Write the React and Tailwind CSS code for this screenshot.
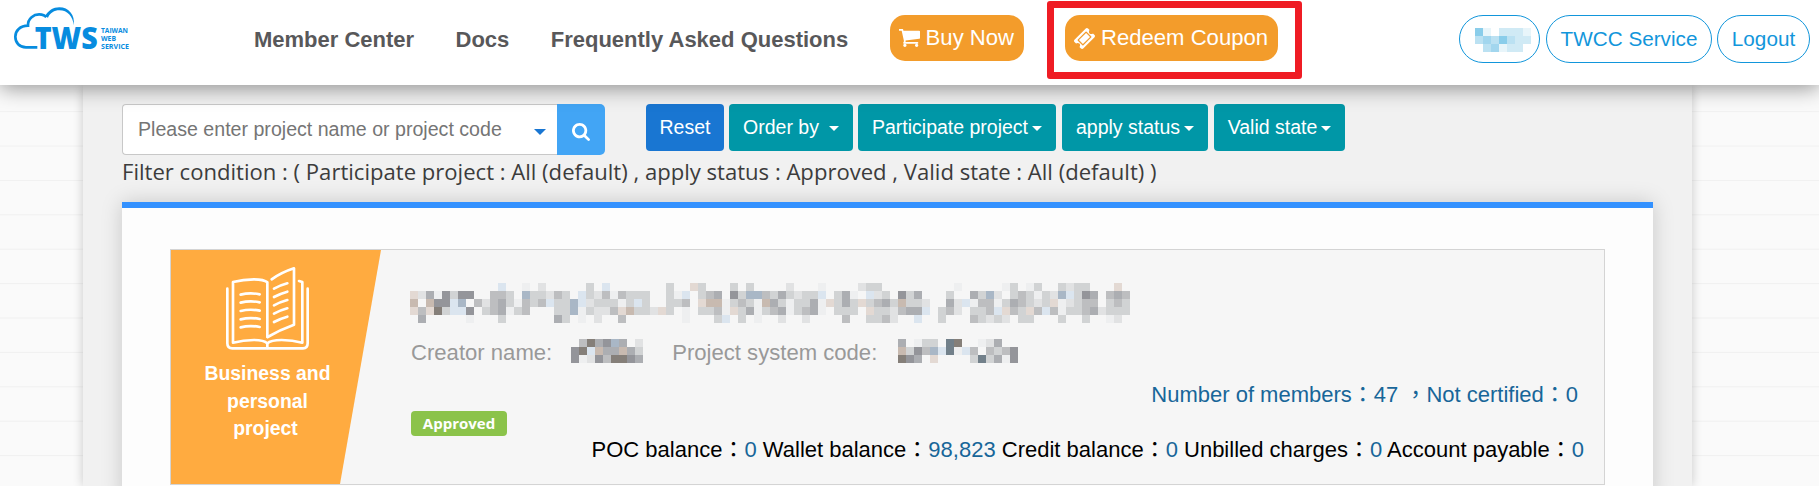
import React from "react";

const navLinks = ["Member Center", "Docs", "Frequently Asked Questions"];

const filters = [
  { label: "Order by", width: "w-[124px]", gap: "ml-2.5", margin: "ml-[5px]" },
  { label: "Participate project", width: "w-[198px]", gap: "ml-1", margin: "ml-[5px]" },
  { label: "apply status", width: "w-[146px]", gap: "ml-1", margin: "ml-[6px]" },
  { label: "Valid state", width: "w-[131px]", gap: "ml-1", margin: "ml-[6px]" },
];

const balances = [
  { label: "POC balance", value: "0" },
  { label: "Wallet balance", value: "98,823" },
  { label: "Credit balance", value: "0" },
  { label: "Unbilled charges", value: "0" },
  { label: "Account payable", value: "0" },
];

// One character per 8px block of a masked value
const palette = {
  1: "#eeeff0",
  2: "#e1e2e3",
  3: "#d1d3d4",
  4: "#bdbec0",
  5: "#acaeb2",
  6: "#94959a",
  7: "#857f79",
  8: "#72808a",
  b: "#dbe5ef",
  c: "#a9b7c6",
  p: "#e3d9d3",
  q: "#c8bab0",
  A: "#8acdea",
  B: "#a2d6ee",
  C: "#bbe1f2",
  D: "#d0eaf5",
  E: "#e8f5fa",
};

const maskedTitle = [
  "...........b..1.2.....3.b.......3..p3...3.3....2...1....233.........1.....13.13..3233...p.",
  "p2516366..443.c33243.b32414333..31b.345.63cc4353233b.351.b23.635...3..53c2.343132cb365.454",
  "q.q66bc.424531434b33cb233313b3..334.pqq13431q5313351p353p3453q332..52b1441354323p12344.343",
  "p4p73bb6.345134...33c13224pq332p3.1.3341p35134513451.333.p332455b.342.334bp43p4b4133452333",
  ".5.....1...3......53.1.2..4.......1...3b.3.1..2..2....4..3342..b..3...43232.33...3..3..12.",
];

const maskedCreator = [".4756c5.2", "67bq55q53", "612647765"];
const maskedCode = ["5.133.87..125..", "q364cb81b4.4346", "765.p....383516"];
const maskedUser = ["AE.DDDE", "CBCACDD", ".CBEDD."];

const Mosaic = ({ rows }) => (
  <div>
    {rows.map((row, i) => (
      <div key={i} className="flex">
        {row.split("").map((cell, j) => (
          <span
            key={j}
            className="block h-2 w-2 shrink-0"
            style={{ backgroundColor: palette[cell] }}
          />
        ))}
      </div>
    ))}
  </div>
);

const Caret = ({ className }) => (
  <svg viewBox="0 0 10 5" className={className} fill="currentColor">
    <path d="M0 0h10L5 5z" />
  </svg>
);

const Logo = () => (
  <svg viewBox="0 0 390 210" className="h-[70px] w-[130px]" fill="#078cdf">
    <path
      d="M112 142H78C58 142 46 128 46 110C46 92 60 77 84 77C83 57 100 40 125 44C131 45 135 47 139 51"
      fill="none"
      stroke="#078cdf"
      strokeWidth="8"
    />
    <path d="M135 49C144 32 160 22 178 22C206 22 226 45 221 76C219 50 203 31 178 31C163 31 150 39 144 53Z" />
    <text
      x="104"
      y="147"
      fontSize="88"
      fontWeight="800"
      fontFamily="'Open Sans'"
      textLength="189"
      lengthAdjust="spacingAndGlyphs"
    >
      TWS
    </text>
    <g fontSize="21" fontWeight="700" fontFamily="'Open Sans'">
      <text x="303" y="99" textLength="81" lengthAdjust="spacingAndGlyphs">TAIWAN</text>
      <text x="303" y="123" textLength="45" lengthAdjust="spacingAndGlyphs">WEB</text>
      <text x="303" y="147" textLength="84" lengthAdjust="spacingAndGlyphs">SERVICE</text>
    </g>
  </svg>
);

const CartIcon = () => (
  <svg viewBox="64 256 1600 1408" preserveAspectRatio="none" className="h-[18px] w-[21px]" fill="currentColor">
    <path d="M640 1536q0 52-38 90t-90 38-90-38-38-90 38-90 90-38 90 38 38 90zm896 0q0 52-38 90t-90 38-90-38-38-90 38-90 90-38 90 38 38 90zm128-1088v512q0 24-16.5 42.5t-40.5 21.5l-1044 122q13 60 13 70 0 16-24 64h920q26 0 45 19t19 45-19 45-45 19h-1024q-26 0-45-19t-19-45q0-11 8-31.5t16-36 21.5-40 15.5-29.5l-177-823h-204q-26 0-45-19t-19-45 19-45 45-19h256q16 0 28.5 6.5t19.5 15.5 13 24.5 8 26 5.5 29.5 4.5 26h1201q26 0 45 19t19 45z" />
  </svg>
);

const TicketIcon = () => (
  <svg viewBox="53 53 1686 1686" className="h-[21px] w-[21px]" fill="currentColor">
    <path d="M1024 452l316 316-572 572-316-316zm-211 979l618-618q19-19 19-45t-19-45l-362-362q-18-18-45-18t-45 18l-618 618q-19 19-19 45t19 45l362 362q18 18 45 18t45-18zm889-637l-907 908q-37 37-90.5 37t-90.5-37l-126-126q56-56 56-136t-56-136-136-56-136 56l-125-126q-37-37-37-90.5t37-90.5l907-906q37-37 90.5-37t90.5 37l125 125q-56 56-56 136t56 136 136 56 136-56l126 125q37 37 37 90.5t-37 90.5z" />
  </svg>
);

const SearchIcon = () => (
  <svg viewBox="64 128 1664 1664" className="h-[18px] w-[18px]" fill="currentColor">
    <path d="M1216 832q0-185-131.5-316.5t-316.5-131.5-316.5 131.5-131.5 316.5 131.5 316.5 316.5 131.5 316.5-131.5 131.5-316.5zm512 832q0 52-38 90t-90 38q-54 0-90-38l-343-342q-179 124-399 124-143 0-273.5-55.5t-225-150-150-225-55.5-273.5 55.5-273.5 150-225 225-150 273.5-55.5 273.5 55.5 225 150 150 225 55.5 273.5q0 220-124 399l343 343q37 37 37 90z" />
  </svg>
);

const BookIcon = () => (
  <svg
    viewBox="345 228 255 255"
    className="h-[85px] w-[85px]"
    fill="none"
    stroke="white"
    strokeWidth="8"
    strokeLinecap="round"
    strokeLinejoin="round"
  >
    <path d="M352 296V460Q352 475 367 475H579Q593 475 593 460V296" />
    <path d="M472 441V277Q462 268 432 268Q400 268 369 276V458Q400 450 432 450Q462 450 472 460V474" />
    <path d="M472 460Q482 450 515 450Q548 450 577 458V276L567 273" />
    <path d="M485 268Q515 247 552 235V404Q510 419 473 441" />
    <path d="M392 314Q420 307 449 313M392 338Q420 331 449 337M392 363Q420 356 449 362M392 388Q420 381 449 387M392 412Q420 405 449 411" />
    <path d="M492 296Q510 286 532 280M492 321Q510 311 532 305M492 346Q510 336 532 330M492 371Q510 361 532 355M492 396Q510 386 532 380" />
  </svg>
);

const Header = () => (
  <header className="relative z-10 flex h-[85px] items-start bg-white pr-[9px] shadow-[0_3px_20px_rgba(0,0,0,0.42)]">
    <Logo />
    <nav className="ml-[124px] flex items-start gap-[41.4px]">
      {navLinks.map((link) => (
        <a key={link} className="text-[22px] leading-[79px] font-bold whitespace-nowrap text-[#58585a]">
          {link}
        </a>
      ))}
      <a className="mt-[15px] flex h-[46px] w-[134px] items-center gap-1.5 rounded-[15px] bg-[#f39c2b] pl-[9px] text-[22.1px] leading-[45px] whitespace-nowrap text-white">
        <CartIcon />
        <span className="-mt-px">Buy Now</span>
      </a>
      <a className="mt-[15px] flex h-[46px] w-[213px] items-center gap-1.5 rounded-[15px] bg-[#f39c2b] pl-[9px] text-[22.1px] leading-[45px] whitespace-nowrap text-white">
        <TicketIcon />
        <span className="-mt-px">Redeem Coupon</span>
      </a>
    </nav>
    {/* Highlight around the coupon button */}
    <div className="absolute top-px left-[1047px] h-[78px] w-[255px] rounded-[3px] border-[7px] border-[#ef1c24]" />
    <div className="mt-[15px] ml-auto flex text-[20.7px] leading-[46px] text-[#1296db]">
      <a className="h-12 w-[81px] rounded-full border border-[#1296db] pt-3 pl-[15px]">
        <Mosaic rows={maskedUser} />
      </a>
      <a className="ml-1.5 h-12 w-[166px] rounded-full border border-[#1296db] text-center whitespace-nowrap">
        TWCC Service
      </a>
      <a className="ml-[5px] h-12 w-[93px] rounded-full border border-[#1296db] text-center">Logout</a>
    </div>
  </header>
);

const Toolbar = () => (
  <div className="flex items-start text-[19.5px]">
    <div className="flex h-[51px] w-[435px] items-center justify-between rounded-l-[4px] border border-r-0 border-[#c8c8c8] bg-white pr-[11px] pl-[15px]">
      <span className="text-[19.6px] whitespace-nowrap text-[#757575]">
        Please enter project name or project code
      </span>
      <Caret className="mt-1 h-1.5 w-3 text-[#1976d2]" />
    </div>
    <button className="flex h-[51px] w-12 items-center justify-center rounded-r-[5px] bg-[#42a5f5] pt-1 text-white">
      <SearchIcon />
    </button>
    <button className="ml-[41px] h-[47px] w-[78px] rounded-[4px] bg-[#1976d2] text-white">
      Reset
    </button>
    {filters.map((filter) => (
      <button
        key={filter.label}
        className={`${filter.width} ${filter.margin} flex h-[47px] items-center justify-center rounded-[4px] bg-[#0097a7] whitespace-nowrap text-white`}
      >
        {filter.label}
        <Caret className={`${filter.gap} mt-0.5 h-[5px] w-2.5`} />
      </button>
    ))}
  </div>
);

const ProjectCard = () => (
  <div className="flex h-[236px] w-[1435px] border border-[#d4d4d4] bg-[#f6f6f6]">
    <div className="flex w-[210px] shrink-0 flex-col items-center bg-[#ffab40] pt-4 pr-[17px] text-center text-[19.4px] leading-[27.5px] font-bold text-white [clip-path:polygon(0_0,100%_0,169px_100%,0_100%)]">
      <BookIcon />
      <p className="mt-[9px] w-[140px]">
        Business and personal <span className="mr-1">project</span>
      </p>
    </div>
    <div className="flex grow flex-col pt-[33px] pl-[30px]">
      <div className="-ml-px">
        <Mosaic rows={maskedTitle} />
      </div>
      <div className="mt-[15px] flex h-[30px] items-center text-[22.1px] whitespace-nowrap text-[#999]">
        <span>Creator name:</span>
        <div className="-mt-1 ml-[19px]">
          <Mosaic rows={maskedCreator} />
        </div>
        <span className="ml-[29px]">Project system code:</span>
        <div className="-mt-1 ml-[21px]">
          <Mosaic rows={maskedCode} />
        </div>
      </div>
      <p className="mt-[11px] mr-[26px] text-right text-[22px] leading-[32px] whitespace-pre text-[#186699]">
        {"Number of members\uff1a47 \uff0cNot certified\uff1a0"}
      </p>
      <span className="flex h-[25px] w-24 items-center justify-center rounded-[4px] bg-[#8bc34a] font-['Open_Sans'] text-[15px] font-bold text-white">
        Approved
      </span>
      <p className="mr-5 -mt-0.5 text-right text-[22px] leading-[32px] whitespace-nowrap text-black">
        {balances.map((item) => (
          <React.Fragment key={item.label}>
            {item.label}
            {"\uff1a"}
            <span className="text-[#186699]">{item.value}</span>{" "}
          </React.Fragment>
        ))}
      </p>
    </div>
  </div>
);

const App = () => {
  return (
    <div
      lang="zh-TW"
      className="h-[486px] overflow-hidden bg-[#fafafa] bg-[linear-gradient(#f0f0f0_1px,transparent_1px)] bg-[length:100%_34.4px] bg-[position:0_8px] font-['Liberation_Sans','Noto_Sans_CJK_TC',sans-serif]"
    >
      <Header />
      <main className="ml-[83px] h-[401px] w-[1609px] bg-[#f1f1f1] pt-[19px] pl-[39px] shadow-[0_0_10px_rgba(0,0,0,0.2)]">
        <Toolbar />
        <p className="h-[47px] font-['Open_Sans',sans-serif] text-[22.08px] leading-[32px] whitespace-nowrap text-[#3c3c3c]">
          Filter condition : ( Participate project : All (default) , apply status : Approved , Valid state : All
          (default) )
        </p>
        <section className="h-[300px] w-[1531px] border-t-[6px] border-[#3391ff] bg-[#fdfdfd] pt-[41px] pl-12 shadow-[0_0_20px_rgba(0,0,0,0.17)]">
          <ProjectCard />
        </section>
      </main>
    </div>
  );
};

export default App;
